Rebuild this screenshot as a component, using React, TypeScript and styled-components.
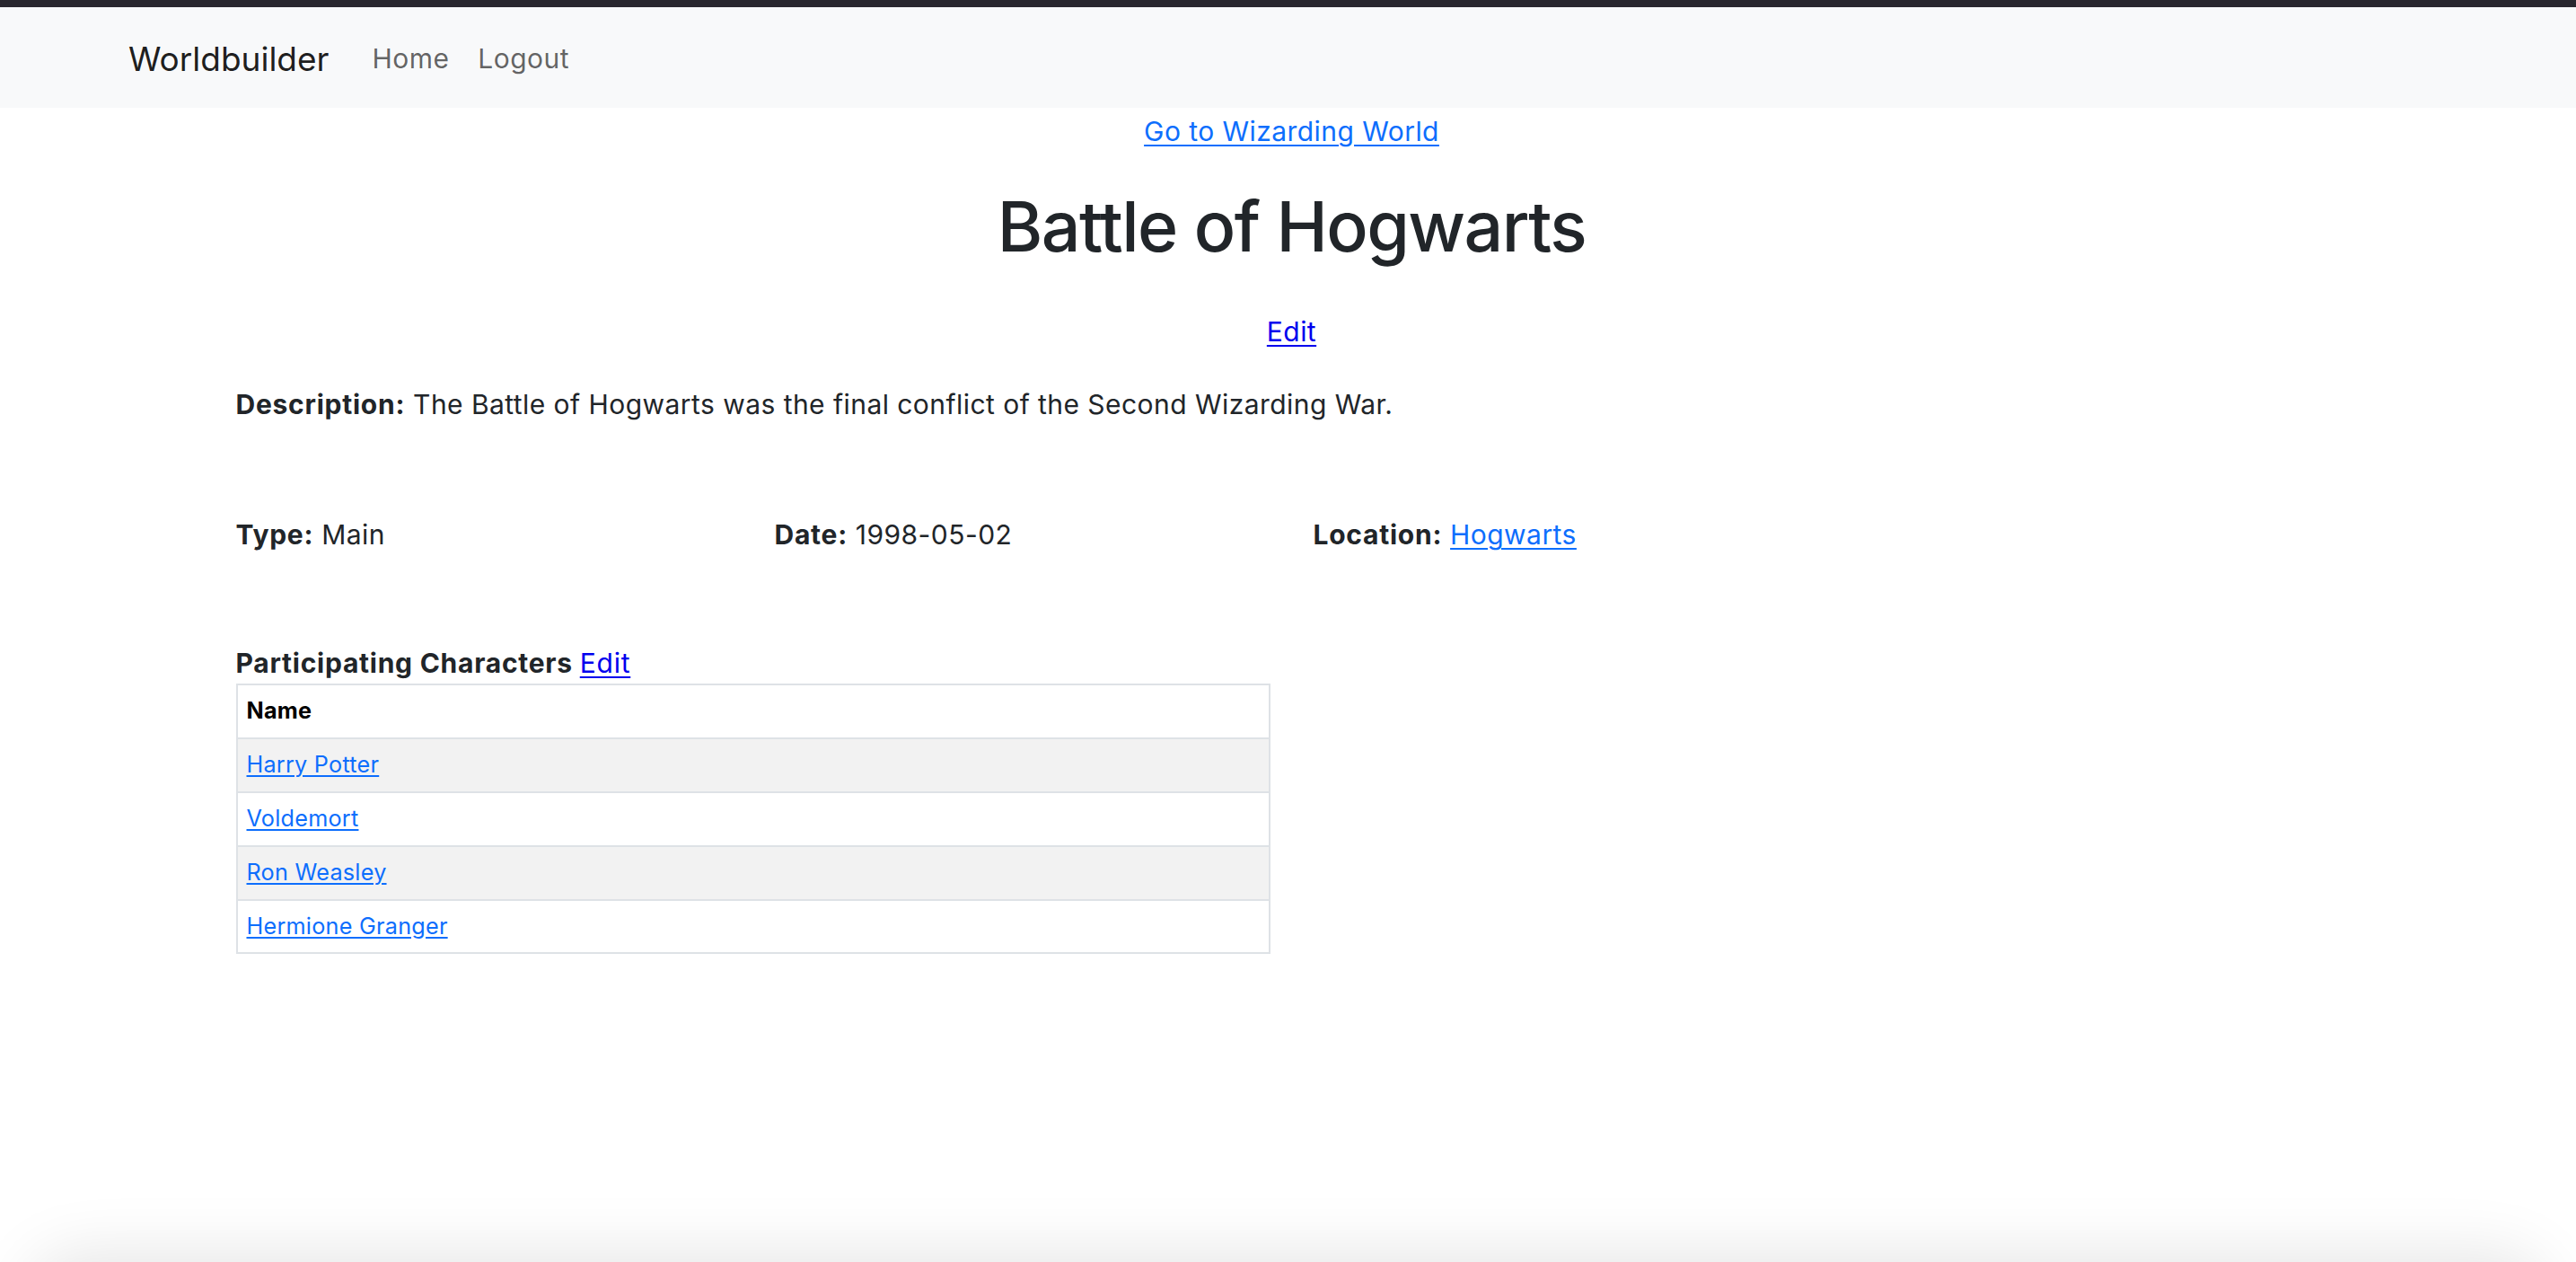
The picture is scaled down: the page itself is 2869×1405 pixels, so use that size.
import React from "react";
import styled, { createGlobalStyle } from "styled-components";

const GlobalStyle = createGlobalStyle`
  html, body {
    margin: 0;
    padding: 0;
    background: #ffffff;
  }
  body {
    font-family: Inter, "Noto Sans", "Liberation Sans", sans-serif;
    color: #212529;
    font-size: 30px;
    line-height: 1.5;
    letter-spacing: 0.015em;
  }
  * { box-sizing: border-box; }
`;

const TopStrip = styled.div`
  height: 8px;
  background: #29272f;
`;

const Navbar = styled.nav`
  height: 112px;
  background: #f8f9fa;
  display: flex;
  align-items: center;
  padding: 3px 0 0 143px;
`;

const Brand = styled.a`
  font-size: 37px;
  color: rgba(0, 0, 0, 0.9);
  text-decoration: none;
  margin-right: 32px;
  letter-spacing: 0;
`;

const NavList = styled.div`
  display: flex;
  align-items: center;
`;

const NavLink = styled.a`
  font-size: 30px;
  color: rgba(0, 0, 0, 0.62);
  text-decoration: none;
  padding: 0 16px;
`;

const Container = styled.main`
  width: 2352px;
  margin-left: calc(50% - 1172px);
`;

const Centered = styled.div<{ $top: number }>`
  text-align: center;
  margin-top: ${(p) => p.$top}px;
`;

const BlueLink = styled.a<{ $variant?: "primary" | "plain" }>`
  color: ${(p) => (p.$variant === "plain" ? "#0000ee" : "#0d6efd")};
  font-weight: 400;
  text-decoration: underline;
  text-underline-offset: 4px;
  text-decoration-thickness: 2px;
`;

const Title = styled.h1`
  margin: 37px 0 49px;
  text-align: center;
  font-size: 77px;
  font-weight: 500;
  line-height: 1.2;
  letter-spacing: -0.02em;
`;

const Paragraph = styled.p<{ $top: number }>`
  margin: ${(p) => p.$top}px 0 0;
`;

const InfoGrid = styled.div`
  display: grid;
  grid-template-columns: repeat(4, 1fr);
  column-gap: 48px;
  margin-top: 100px;
`;

const Label = styled.strong`
  font-weight: 700;
  letter-spacing: 0.025em;
`;

const CharactersGrid = styled.div`
  display: grid;
  grid-template-columns: 1fr 1fr;
  column-gap: 48px;
  margin-top: 98px;
`;

const SectionHeading = styled.div`
  font-weight: 700;
  letter-spacing: 0.025em;
`;

const Table = styled.table`
  width: 100%;
  border-collapse: collapse;
  font-size: 25.2px;
  line-height: 1.5;
  letter-spacing: 0.01em;
  margin-top: 0;
`;

const Th = styled.th`
  text-align: left;
  font-weight: 700;
  color: #000;
  padding: 10px 10px;
  border: 2px solid #dee2e6;
`;

const Tr = styled.tr<{ $striped: boolean }>`
  background: ${(p) => (p.$striped ? "#f2f2f2" : "#ffffff")};
`;

const Td = styled.td`
  padding: 10px 10px;
  border: 2px solid #dee2e6;
`;

const CellLink = styled.a`
  color: #0d6efd;
  text-decoration: underline;
  text-underline-offset: 3px;
  text-decoration-thickness: 2px;
`;

const BottomShade = styled.div`
  position: fixed;
  left: 40px;
  right: 40px;
  bottom: -100px;
  height: 100px;
  border-radius: 60px;
  box-shadow: 0 0 70px 10px rgba(0, 0, 0, 0.1);
  pointer-events: none;
`;

const characters = ["Harry Potter", "Voldemort", "Ron Weasley", "Hermione Granger"];

export default function App() {
  return (
    <>
      <GlobalStyle />
      <TopStrip />
      <Navbar>
        <Brand href="#">Worldbuilder</Brand>
        <NavList>
          <NavLink href="#">Home</NavLink>
          <NavLink href="#">Logout</NavLink>
        </NavList>
      </Navbar>
      <Container>
        <Centered $top={4}>
          <BlueLink href="#">Go to Wizarding World</BlueLink>
        </Centered>
        <Title>Battle of Hogwarts</Title>
        <Centered $top={0}>
          <BlueLink href="#" $variant="plain">
            Edit
          </BlueLink>
        </Centered>
        <Paragraph $top={36}>
          <Label>Description:</Label> The Battle of Hogwarts was the final conflict of the Second
          Wizarding War.
        </Paragraph>
        <InfoGrid>
          <div>
            <Label>Type:</Label> Main
          </div>
          <div>
            <Label>Date:</Label> 1998-05-02
          </div>
          <div>
            <Label>Location:</Label> <BlueLink href="#">Hogwarts</BlueLink>
          </div>
        </InfoGrid>
        <CharactersGrid>
          <div>
            <SectionHeading>
              Participating Characters{" "}
              <BlueLink href="#" $variant="plain">
                Edit
              </BlueLink>
            </SectionHeading>
            <Table>
              <thead>
                <tr>
                  <Th>Name</Th>
                </tr>
              </thead>
              <tbody>
                {characters.map((c, i) => (
                  <Tr key={c} $striped={i % 2 === 0}>
                    <Td>
                      <CellLink href="#">{c}</CellLink>
                    </Td>
                  </Tr>
                ))}
              </tbody>
            </Table>
          </div>
        </CharactersGrid>
      </Container>
      <BottomShade />
    </>
  );
}
